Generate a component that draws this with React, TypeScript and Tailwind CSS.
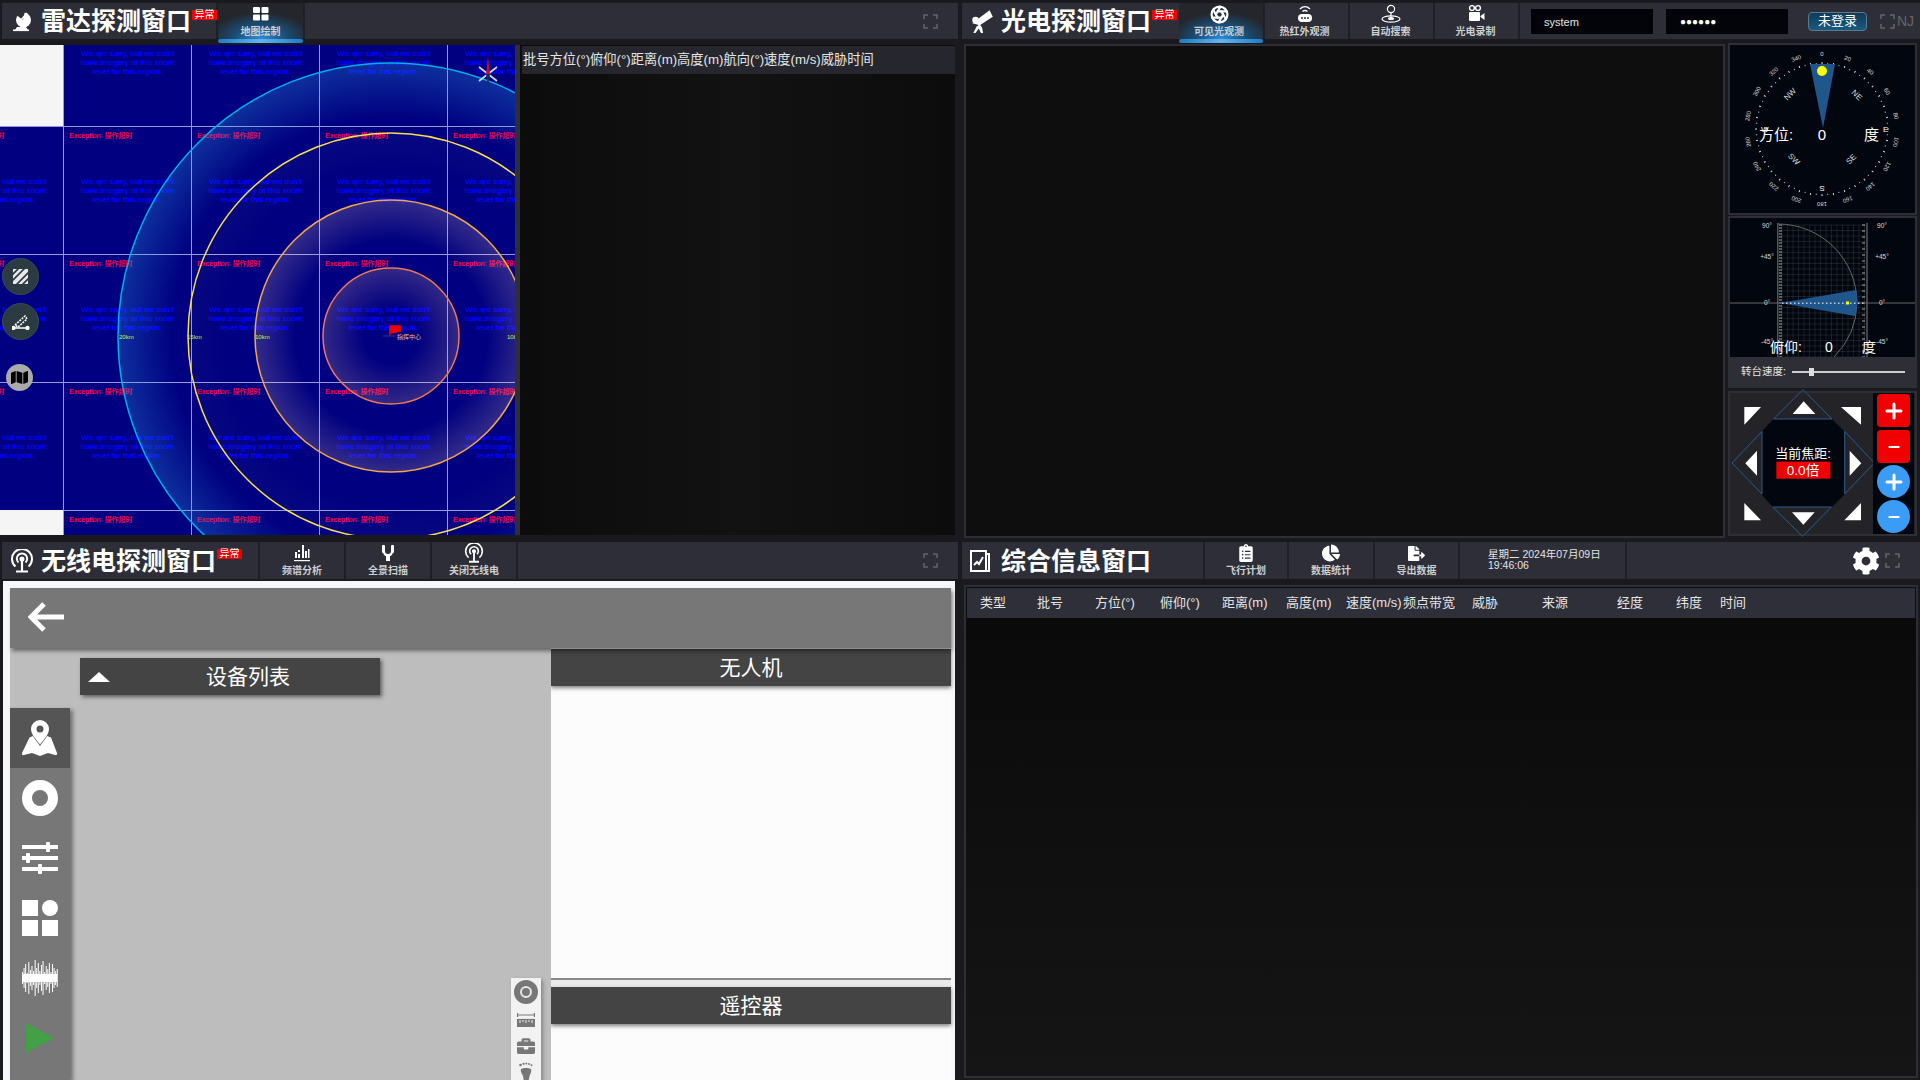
import React from "react";
import { Aperture, Minus, Plus } from "lucide-react";
import { FaBriefcase, FaMap, FaCog, FaChartPie, FaFileExport, FaClipboardList } from "react-icons/fa";

const FONT = '"Liberation Sans","Noto Sans CJK SC",sans-serif';

function FullscreenIcon() {
  return (
    <svg width="15" height="15" viewBox="0 0 15 15" fill="none" stroke="#666" strokeWidth="1.5" className="shrink-0">
      <path d="M1 5V1h4M10 1h4v4M14 10v4h-4M5 14H1v-4" />
    </svg>
  );
}

function Badge() {
  return <span className="self-start mt-[7px] ml-[1px] bg-[#f00000] text-white text-[10px] leading-[10px] h-[10px] w-[25px] text-center shrink-0">异常</span>;
}

function Tab({ w, label, icon, active }: { w: string; label: string; icon: React.ReactNode; active?: boolean }) {
  return (
    <div className={`relative ${w} h-full shrink-0 flex flex-col items-center border-r-2 border-[#1f2024] ${active ? "bg-[radial-gradient(ellipse_60%_75%_at_50%_100%,#2f8fd8_0%,#1a4f78_50%,#24262b_100%)]" : ""}`}>
      <div className="h-[22px] flex items-center justify-center text-white">{icon}</div>
      <span className="mt-[1px] text-[10px] leading-[12px] font-bold text-[#cfcfcf]">{label}</span>
      {active && <div className="absolute left-0 right-0 top-[36px] h-[4px] rounded-sm bg-[linear-gradient(90deg,#1f7cc8,#62b4f0,#1f7cc8)]" />}
    </div>
  );
}

function GridIcon() {
  return (
    <svg width="16" height="14" viewBox="0 0 16 14" fill="#fff">
      <rect width="7" height="6" rx="1" /><rect x="8.5" width="7" height="6" rx="1" />
      <rect y="7.5" width="7" height="6" rx="1" /><rect x="8.5" y="7.5" width="7" height="6" rx="1" />
    </svg>
  );
}

function Dish() {
  return (
    <svg width="20" height="22" viewBox="0 0 20 22" fill="#fff">
      <circle cx="11.5" cy="10" r="7.5" />
      <path d="M3 4L13 1l-2 9z" fill="#2d2e37" />
      <path d="M9 10l6-7" stroke="#fff" strokeWidth="1.6" />
      <path d="M5 17l-2 3h13l-2-3z" />
      <rect x="1" y="19.5" width="16" height="1.6" />
    </svg>
  );
}

function Tower({ s }: { s: number }) {
  return (
    <svg width={s} height={s} viewBox="0 0 24 24" fill="none" stroke="#fff" strokeWidth="2">
      <path d="M5.5 17.5a10 10 0 1 1 13 0" />
      <path d="M8.5 13.5a5.2 5.2 0 1 1 7 0" />
      <circle cx="12" cy="10" r="1.5" fill="#fff" />
      <path d="M12 11v11M6 22.5h12" strokeWidth="2.2" />
    </svg>
  );
}

function Thermal() {
  return (
    <svg width="18" height="20" viewBox="0 0 18 20" fill="none" stroke="#fff" strokeWidth="1.4">
      <path d="M4 5c3-3 7-3 10 0M6.5 7.5c1.5-1.2 3.5-1.2 5 0" />
      <rect x="2" y="10" width="14" height="8" rx="4" fill="#fff" stroke="none" />
      <circle cx="6" cy="14" r="1" fill="#333" stroke="none" /><circle cx="9" cy="14" r="1" fill="#333" stroke="none" /><circle cx="12" cy="14" r="1" fill="#333" stroke="none" />
    </svg>
  );
}

function AutoSearch() {
  return (
    <svg width="22" height="20" viewBox="0 0 22 20" fill="none" stroke="#fff" strokeWidth="1.2">
      <circle cx="11" cy="5" r="3.6" />
      <path d="M11 9v5" />
      <ellipse cx="11" cy="15" rx="9" ry="3.2" />
      <ellipse cx="11" cy="14.5" rx="2.5" ry="1" fill="#fff" />
    </svg>
  );
}

function Record() {
  return (
    <svg width="18" height="20" viewBox="0 0 18 20" fill="#fff">
      <circle cx="5" cy="4" r="2.4" fill="none" stroke="#fff" strokeWidth="1.4" />
      <circle cx="11" cy="4" r="2.4" fill="none" stroke="#fff" strokeWidth="1.4" />
      <rect x="2" y="8" width="11" height="9" rx="1" />
      <path d="M13.5 12l4-3v7l-4-3z" />
    </svg>
  );
}

function Spectrum() {
  return (
    <svg width="18" height="20" viewBox="0 0 18 20" fill="#fff">
      <rect x="2" y="9" width="2" height="6" /><rect x="5" y="7" width="2" height="2" /><rect x="5" y="11" width="2" height="4" />
      <rect x="9" y="2" width="2" height="13" /><rect x="12" y="8" width="2" height="7" /><rect x="15" y="6" width="1.5" height="9" />
      <rect x="1" y="17" width="16" height="1.2" />
    </svg>
  );
}

function Plug() {
  return (
    <svg width="14" height="18" viewBox="0 0 14 18" fill="#fff">
      <rect x="1" y="1" width="3" height="8" rx="1" /><rect x="10" y="1" width="3" height="8" rx="1" />
      <path d="M2 7c0 4 2 5 3 5v5h4v-5c1 0 3-1 3-5h-2c0 2-1 3-3 3S4 9 4 7z" />
    </svg>
  );
}

function Hatched() {
  return (
    <svg width="15" height="15" viewBox="0 0 15 15">
      <rect width="15" height="15" fill="#e8e8e8" />
      <path d="M-1 6L6-1M-1 12L12-1M3 16L16 3M9 16L16 9" stroke="#2b3a42" strokeWidth="1.6" />
    </svg>
  );
}

function Measure() {
  return (
    <svg width="18" height="16" viewBox="0 0 18 16" fill="none" stroke="#fff" strokeWidth="1.5">
      <path d="M1 14h16" /><circle cx="1.5" cy="14" r="1.4" fill="#fff" /><circle cx="15.5" cy="14" r="1.4" fill="#fff" />
      <path d="M3 11L13 2l2 3L6 13z" strokeDasharray="2 1" />
    </svg>
  );
}

function Tile() {
  return (
    <div className="relative bg-[#000080] border-l border-t border-[#9a9ad8] h-[128px] w-[128px]">
      <div className="absolute left-[5px] top-[4px] whitespace-nowrap text-[7.2px] leading-[10px] text-[#e8004a] [text-shadow:0_0_0.6px_#e8004a]">
        Exception: <span className="text-[7px]">操作超时</span>
      </div>
      <div className="absolute left-0 right-0 top-[50px] text-center text-[8px] leading-[9px] text-[#0000ff] [text-shadow:0_0_0.6px_#0000ff]">
        We are sorry, but we don't<br />have imagery at this zoom<br />level for this region.
      </div>
    </div>
  );
}

function RadarMap() {
  const tiles: React.ReactNode[] = [];
  for (let r = 0; r < 5; r++) {
    for (let c = 0; c < 5; c++) {
      const white = c === 0 && (r === 0 || r === 4);
      if (white) {
        tiles.push(<div key={`${r}-${c}`} className="bg-[#f5f5f5] h-[128px] w-[128px]" />);
      } else tiles.push(<Tile key={`${r}-${c}`} />);
    }
  }
  const cx = 391, cy = 291;
  return (
    <div className="relative w-[515px] h-[490px] overflow-hidden shrink-0 bg-[#000080]" style={{ fontFamily: FONT }}>
      <div className="absolute left-[-65px] top-[-47px] grid grid-cols-[repeat(5,128px)] grid-rows-[repeat(5,128px)]">{tiles}</div>
      <svg className="absolute inset-0" width="516" height="490" viewBox="0 0 516 490">
        <defs>
          <radialGradient id="g1"><stop offset="0.4" stopColor="#ffc8a0" stopOpacity="0" /><stop offset="1" stopColor="#ffc8a0" stopOpacity="0.2" /></radialGradient>
          <radialGradient id="g2"><stop offset="0.7" stopColor="#ffd8b0" stopOpacity="0" /><stop offset="1" stopColor="#ffd8b0" stopOpacity="0.2" /></radialGradient>
          <radialGradient id="g3"><stop offset="0.8" stopColor="#ffe8a0" stopOpacity="0" /><stop offset="1" stopColor="#ffe8a0" stopOpacity="0.03" /></radialGradient>
          <radialGradient id="g4"><stop offset="0.8" stopColor="#30a8e8" stopOpacity="0" /><stop offset="1" stopColor="#30a8e8" stopOpacity="0.28" /></radialGradient>
        </defs>
        <circle cx={cx} cy={cy} r="273" fill="url(#g4)" stroke="#00b0e8" strokeWidth="1.5" />
        <circle cx={cx} cy={cy} r="203" fill="url(#g3)" stroke="#f5e050" strokeWidth="1.5" />
        <circle cx={cx} cy={cy} r="136" fill="url(#g2)" stroke="#f0a848" strokeWidth="1.5" />
        <circle cx={cx} cy={cy} r="68" fill="url(#g1)" stroke="#f07850" strokeWidth="1.5" />
        <g fontSize="6" fill="#d8e850">
          <text x="119" y="294">20km</text>
          <text x="187" y="294">15km</text>
          <text x="255" y="294">10km</text>
          <text x="507" y="294">10k</text>
        </g>
        <path d="M390 291V281M390 281h10v5l-10 2z" fill="#f00000" stroke="#f00000" strokeWidth="1.6" />
        <path d="M383 291h13" stroke="#202080" strokeWidth="1.5" />
        <text x="397" y="294" fontSize="6" fill="#f0c080">指挥中心</text>
        <g transform="translate(488 29)">
          <path d="M-9 -7L9 7M9 -7L-9 7" stroke="#d8d8e8" strokeWidth="1.6" />
          <path d="M0 -17L2 0H-2z" fill="#c01030" />
          <path d="M0 17L2 0H-2z" fill="#103060" />
        </g>
      </svg>
      <div className="absolute left-[2px] top-[213px] w-[37px] h-[37px] rounded-full bg-[#2c3a42] border border-[#3c4a52] flex items-center justify-center"><Hatched /></div>
      <div className="absolute left-[2px] top-[258px] w-[37px] h-[37px] rounded-full bg-[#2c3a42] border border-[#3c4a52] flex items-center justify-center"><Measure /></div>
      <div className="absolute left-[6px] top-[319px] w-[27px] h-[27px] rounded-full bg-[#aaaaaa] flex items-center justify-center text-black"><FaMap size={17} /></div>
    </div>
  );
}

function Compass() {
  const cx = 92, cy = 84;
  const ticks: React.ReactNode[] = [];
  for (let a = 0; a < 360; a += 5) {
    ticks.push(<line key={a} x1={cx} y1={cy - 65} x2={cx} y2={cy - (a % 10 === 0 ? 67 : 66)} stroke="#ddd" strokeWidth="1" transform={`rotate(${a} ${cx} ${cy})`} />);
  }
  const labels: React.ReactNode[] = [];
  for (let a = 0; a < 360; a += 20) {
    labels.push(<text key={a} x={cx} y={cy - 73} fontSize="6" textAnchor="middle" fill="#dddddd" transform={`rotate(${a} ${cx} ${cy})`}>{a}</text>);
  }
  const dirs: [string, number, number, number][] = [["NW", 62, 51, -45], ["NE", 125, 52, 45], ["SW", 62, 116, 45], ["SE", 123, 116, -45]];
  return (
    <svg width="185" height="168" viewBox="0 0 185 168" className="block bg-[#02060e]">
      {ticks}
      {labels}
      <path d="M80 19H105L93 83z" fill="#1f568c" />
      <circle cx={92} cy={26} r="5" fill="#ffff00" />
      {dirs.map(([t, x, y, r]) => (
        <text key={t} x={x} y={y} fontSize="8" textAnchor="middle" fill="#ddd" transform={`rotate(${r} ${x} ${y})`}>{t}</text>
      ))}
      <text x={153} y={87} fontSize="8" fill="#fff">E</text>
      <text x={31} y={87} fontSize="8" fill="#fff">W</text>
      <text x={92} y={147} fontSize="8" fill="#fff" textAnchor="middle" transform="rotate(180 92 144)">S</text>
      <g fontSize="15" fill="#fff">
        <text x={29} y={95}>方位:</text>
        <text x={92} y={95} textAnchor="middle">0</text>
        <text x={134} y={95}>度</text>
      </g>
    </svg>
  );
}

function Pitch() {
  const grid: React.ReactNode[] = [];
  for (let x = 52; x <= 136; x += 5.5) grid.push(<line key={`v${x}`} x1={x} y1={7} x2={x} y2={139} stroke="#fff" strokeOpacity="0.09" />);
  for (let y = 7; y <= 139; y += 5.5) grid.push(<line key={`h${y}`} x1={50} y1={y} x2={136} y2={y} stroke="#fff" strokeOpacity="0.09" />);
  const ticks: React.ReactNode[] = [];
  for (let y = 7; y <= 139; y += 3) ticks.push(<line key={y} x1={49} y1={y} x2={52} y2={y} stroke="#aaa" />);
  for (let y = 7; y <= 139; y += 6) ticks.push(<line key={`r${y}`} x1={132} y1={y} x2={135} y2={y} stroke="#aaa" />);
  const dots: React.ReactNode[] = [];
  for (let x = 52; x <= 134; x += 4) dots.push(<rect key={x} x={x} y={84.5} width="1.5" height="1.5" fill="#bcd" />);
  const labels: [string, number][] = [["90°", 8], ["+45°", 39], ["0°", 85], ["-45°", 124]];
  return (
    <svg width="185" height="139" viewBox="0 0 185 139" className="block bg-[#02060e]">
      {grid}
      {ticks}
      <rect x="47" y="5" width="1.5" height="134" fill="#555" />
      <rect x="136" y="5" width="2" height="134" fill="#444" />
      <line x1="0" y1="85" x2="185" y2="85" stroke="#666" />
      <path d="M48 6A79 79 0 0 1 127 85A79 79 0 0 1 104 139" fill="none" stroke="#666" />
      <path d="M50 85L126 72Q129 85 125 98z" fill="#1f568c" />
      {dots}
      <rect x="116" y="83.5" width="3" height="3" fill="#ffff00" />
      <g fontSize="6.5" fill="#ddd">
        {labels.map(([t, y]) => (
          <React.Fragment key={t}>
            <text x={37} y={y + 2} textAnchor="middle">{t}</text>
            <text x={152} y={y + 2} textAnchor="middle">{t}</text>
          </React.Fragment>
        ))}
      </g>
      <g fontSize="14" fill="#fff">
        <text x={40} y={134}>俯仰:</text>
        <text x={99} y={134} textAnchor="middle">0</text>
        <text x={132} y={134}>度</text>
      </g>
    </svg>
  );
}

function Pad() {
  const blue = "#2a5a8c";
  return (
    <svg width="141" height="141" viewBox="35 25 423 423" className="block shrink-0 overflow-visible">
      <polygon points="160,103 335,103 372,140 372,330 335,367 157,367 125,330 125,140" fill="#02060e" />
      <polygon points="248,15 160,103 335,103" fill="none" stroke={blue} strokeWidth="3" />
      <polygon points="157,367 333,367 247,455" fill="none" stroke={blue} strokeWidth="3" />
      <polygon points="125,140 125,328 35,235" fill="none" stroke={blue} strokeWidth="3" />
      <polygon points="373,140 373,328 462,235" fill="none" stroke={blue} strokeWidth="3" />
      <g fill="#fff">
        <polygon points="250,50 217,88 285,88" />
        <polygon points="215,383 283,383 249,420" />
        <polygon points="110,198 110,273 75,236" />
        <polygon points="388,198 388,273 423,236" />
        <polygon points="72,67 122,67 72,120" />
        <polygon points="362,67 422,67 422,120" />
        <polygon points="72,355 122,407 72,407" />
        <polygon points="422,355 422,407 372,407" />
      </g>
      <text x="248" y="219" fontSize="39" fill="#fff" textAnchor="middle">当前焦距:</text>
      <rect x="168" y="231" width="162" height="51" fill="#f00000" />
      <text x="248" y="271" fontSize="41" fill="#fff" textAnchor="middle">0.0倍</text>
    </svg>
  );
}

function ArrowBack() {
  return (
    <svg width="36" height="30" viewBox="0 0 36 30" fill="none" stroke="#fff" strokeWidth="5">
      <path d="M36 15H3M16 2L3 15l13 13" />
    </svg>
  );
}

function MapPin() {
  return (
    <svg width="36" height="36" viewBox="0 0 36 36" fill="#fff">
      <path fillRule="evenodd" d="M18 0a9 9 0 0 1 9 9c0 5.500-5.500 11-9 15.500C14.500 20 9 14.500 9 9a9 9 0 0 1 9-9zm0 5.500a3.500 3.500 0 1 0 0 7 3.500 3.500 0 0 0 0-7z" />
      <path d="M7.500 17.500L11 16c1.500 3 5 7 7 10 2-3 5.500-7 7-10l4 1.500L35 33c.5 1.500-.5 2.500-2 2l-7-2-8 3-8-3-8 2c-1.500.5-2.500-.5-2-2z" />
    </svg>
  );
}

function Sliders() {
  return (
    <svg width="36" height="36" viewBox="0 0 36 36" fill="#fff">
      <rect y="5" width="36" height="4" /><rect x="24" y="2" width="4" height="10" rx="1" />
      <rect y="16" width="36" height="4" /><rect x="4" y="13" width="4" height="10" rx="1" />
      <rect y="27" width="36" height="4" /><rect x="16" y="24" width="4" height="10" rx="1" />
    </svg>
  );
}

function Shapes() {
  return (
    <svg width="36" height="36" viewBox="0 0 36 36" fill="#fff">
      <rect width="16" height="16" /><circle cx="28" cy="8" r="8" />
      <rect y="20" width="16" height="16" /><rect x="20" y="20" width="16" height="16" />
    </svg>
  );
}

function Wave() {
  const hs = [12, 20, 28, 10, 32, 16, 24, 14, 36, 20, 30, 14, 26, 34, 12, 24, 18, 30, 12, 28, 20, 14, 18];
  return (
    <svg width="36" height="38" viewBox="0 0 36 38" fill="#fff">
      <rect x="1" y="15" width="34" height="8" />
      {hs.map((h, i) => <rect key={i} x={i * 1.58} y={19 - h / 2} width="1" height={h} />)}
    </svg>
  );
}

function Ruler() {
  return (
    <svg width="18" height="14" viewBox="0 0 18 14" fill="none" stroke="#777777" strokeWidth="1.2">
      <path d="M0.600 0v4M17.400 0v4M0.600 2h16.800" />
      <rect x="0.600" y="6.500" width="16.800" height="7" fill="#777777" />
      <path d="M3 7v3M6 7v2M9 7v3M12 7v2M15 7v3" stroke="#f2f2f2" strokeWidth="1" />
    </svg>
  );
}

function Foot() {
  return (
    <svg width="14" height="20" viewBox="0 0 14 20" fill="#777777">
      <path d="M2 7c2-1.500 8-1.500 10 0 1 3-1 5-1.500 7-.3 3-1 6-3.500 6S4.500 17 4 14C3.500 12 1 10 2 7z" />
      <circle cx="1.500" cy="3" r="1.300" /><circle cx="4.500" cy="1.800" r="1.100" /><circle cx="7.300" cy="1.500" r="1" /><circle cx="10" cy="2" r="1" /><circle cx="12.500" cy="3.200" r="1" />
    </svg>
  );
}

function NavItem({ children, active }: { children: React.ReactNode; active?: boolean }) {
  return <div className={`h-[60px] shrink-0 flex items-center justify-center text-white ${active ? "bg-[#555555]" : ""}`}>{children}</div>;
}

function Title({ text, icon }: { text: string; icon: React.ReactNode }) {
  return (
    <div className="flex items-center h-full">
      <div className="w-[39px] flex items-center justify-center shrink-0">{icon}</div>
      <span className="text-[25px] leading-[30px] font-bold text-white whitespace-nowrap">{text}</span>
    </div>
  );
}

const COLS: [string, string][] = [
  ["类型", "w-[57px]"], ["批号", "w-[58px]"], ["方位(°)", "w-[65px]"], ["俯仰(°)", "w-[62px]"], ["距离(m)", "w-[64px]"],
  ["高度(m)", "w-[60px]"], ["速度(m/s)", "w-[57px]"], ["频点带宽", "w-[69px]"], ["威胁", "w-[70px]"], ["来源", "w-[75px]"],
  ["经度", "w-[59px]"], ["纬度", "w-[44px]"], ["时间", "w-[40px]"],
];

export default function App() {
  const hdr = "flex items-center h-[36px] mx-[2px] bg-[#2d2e37]";
  return (
    <div className="w-[1920px] h-[1080px] overflow-hidden bg-[#1a1a1e] flex flex-col" style={{ fontFamily: FONT }}>
      <div className="flex h-[542px] shrink-0">
        {/* Radar */}
        <div className="w-[960px] flex flex-col pt-[3px]">
          <div className={hdr}>
            <div className="w-[216px] h-full flex items-center border-r-2 border-[#1f2024]">
              <Title text="雷达探测窗口" icon={<Dish />} />
              <Badge />
            </div>
            <Tab w="w-[87px]" label="地图绘制" icon={<GridIcon />} active />
            <div className="ml-auto mr-[20px]"><FullscreenIcon /></div>
          </div>
          <div className="flex mt-[6px] h-[490px]">
            <RadarMap />
            <div className="w-[7px] bg-[#2e2f36] border-r-2 border-[#0c0c0c]" />
            <div className="w-[433px] flex flex-col bg-[#0c0c0c]">
              <div className="h-[28px] mt-[1px] bg-[#26272e] flex items-center pl-[1px] text-[13.25px] text-[#e5e5e5] whitespace-nowrap">批号方位(°)俯仰(°)距离(m)高度(m)航向(°)速度(m/s)威胁时间</div>
              <div className="flex-1 bg-[linear-gradient(90deg,#0c0c0c,#121212_50%,#0c0c0c)]" />
            </div>
          </div>
        </div>
        {/* Optical */}
        <div className="w-[960px] flex flex-col pt-[3px]">
          <div className="flex items-center h-[36px] ml-[2px] bg-[#2d2e37]">
            <div className="w-[217px] h-full flex items-center">
              <Title text="光电探测窗口" icon={
                <svg width="24" height="26" viewBox="0 0 22 24" fill="#fff"><path d="M2 14L18 2l3 6-12 8zM9 15l2 3 1 5h-2l-2-4-3 4H3l3-6z" /><circle cx="5" cy="11" r="3" /></svg>
              } />
              <Badge />
            </div>
            <Tab w="w-[86px] pr-[4px]" label="可见光观测" icon={<Aperture size={19} strokeWidth={2.8} />} active />
            <Tab w="w-[85px] pr-[4px]" label="热红外观测" icon={<Thermal />} />
            <Tab w="w-[85px] pr-[2px]" label="自动搜索" icon={<AutoSearch />} />
            <Tab w="w-[85px] pr-[2px]" label="光电录制" icon={<Record />} />
            <div className="w-[122px] h-[25px] ml-[11px] bg-[#02040a] flex items-center pl-[13px] pt-[2px] text-[11px] text-[#e5e5e5] shrink-0">system</div>
            <div className="w-[122px] h-[25px] ml-[13px] bg-[#02040a] flex items-center pl-[14px] pt-[1px] text-[10px] text-white shrink-0">●●●●●●</div>
            <div className="w-[59px] h-[19px] ml-[20px] rounded-sm border border-[#5a7a90] bg-[linear-gradient(180deg,#0f3a58,#1a5a80)] flex items-center justify-center text-[13px] text-white shrink-0">未登录</div>
            <div className="ml-[13px] shrink-0"><FullscreenIcon /></div>
            <span className="text-[14px] text-[#666] ml-[2px]">NJ</span>
          </div>
          <div className="flex mt-[4px] ml-[4px] h-[494px]">
            <div className="w-[761px] h-full mt-[1px] bg-[#0e0e0e] border-2 border-[#2e2f36]" />
            <div className="w-[189px] ml-[3px] flex flex-col">
              <div className="h-[172px] border-2 border-[#2e2f36] overflow-hidden"><Compass /></div>
              <div className="h-[172px] mt-[1px] border-2 border-[#2e2f36] flex flex-col overflow-hidden">
                <Pitch />
                <div className="flex-1 bg-[#2e2f36] flex items-center pl-[11px]">
                  <span className="text-[10.5px] text-[#e5e5e5] w-[51px] whitespace-nowrap">转台速度:</span>
                  <div className="relative w-[113px] h-[2px] bg-[#cccccc]">
                    <div className="absolute left-[17px] top-[-3px] w-[5px] h-[8px] bg-[#dddddd]" />
                  </div>
                </div>
              </div>
              <div className="h-[145px] mt-[3px] border-2 border-[#2e2f36] bg-[#242428] flex pl-[2px]">
                <Pad />
                <div className="w-[41px] bg-[#02060e] flex flex-col items-center pt-[1px] text-white">
                  <div className="w-[33px] h-[33px] bg-[#f00000] rounded-sm flex items-center justify-center"><Plus size={24} strokeWidth={3} /></div>
                  <div className="w-[33px] h-[33px] mt-[3px] bg-[#f00000] rounded-sm flex items-center justify-center"><Minus size={16} strokeWidth={3} /></div>
                  <div className="w-[33px] h-[33px] mt-[2px] bg-[#3a9cf5] rounded-full flex items-center justify-center"><Plus size={24} strokeWidth={3} /></div>
                  <div className="w-[33px] h-[33px] mt-[2px] bg-[#3a9cf5] rounded-full flex items-center justify-center"><Minus size={16} strokeWidth={3} /></div>
                </div>
              </div>
            </div>
          </div>
        </div>
      </div>

      <div className="flex flex-1 min-h-0">
        {/* Radio */}
        <div className="w-[960px] flex flex-col">
          <div className="flex items-center h-[37px] mx-[2px] bg-[#2d2e37] shrink-0">
            <div className="w-[258px] h-full flex items-center border-r-2 border-[#1f2024]">
              <Title text="无线电探测窗口" icon={<Tower s={24} />} />
              <Badge />
            </div>
            <div className="h-full flex items-center">
              <Tab w="w-[86px]" label="频谱分析" icon={<Spectrum />} />
              <Tab w="w-[86px]" label="全景扫描" icon={<Plug />} />
              <Tab w="w-[86px]" label="关闭无线电" icon={<Tower s={20} />} />
            </div>
            <div className="ml-auto mr-[20px]"><FullscreenIcon /></div>
          </div>
          <div className="mt-[2px] ml-[3px] w-[952px] flex-1 min-h-0 bg-[#f5f7fa] pl-[7px] pr-[4px] pt-[7px] flex flex-col overflow-hidden">
            <div className="h-[60px] shrink-0 bg-[#777777] shadow-[2px_3px_4px_rgba(0,0,0,.45)] flex items-center pl-[18px] pb-[2px] relative z-10"><ArrowBack /></div>
            <div className="flex flex-1 min-h-0">
              <div className="relative w-[541px] bg-[#bdbdbd] pt-[10px] flex flex-col">
                <div className="ml-[70px] w-[300px] h-[37px] bg-[#444444] shadow-[2px_2px_4px_rgba(0,0,0,.5)] flex items-center relative shrink-0">
                  <div className="ml-[8px] w-0 h-0 border-l-[11px] border-r-[11px] border-b-[10px] border-l-transparent border-r-transparent border-b-white" />
                  <span className="absolute left-0 right-0 text-center text-[21px] text-white" style={{ paddingLeft: 36 }}>设备列表</span>
                </div>
                <div className="mt-[13px] w-[60px] flex-1 bg-[#777777] shadow-[3px_2px_4px_rgba(0,0,0,.4)] flex flex-col">
                  <NavItem active><MapPin /></NavItem>
                  <NavItem><div className="w-[36px] h-[36px] rounded-full border-[10px] border-white" /></NavItem>
                  <NavItem><Sliders /></NavItem>
                  <NavItem><Shapes /></NavItem>
                  <NavItem><Wave /></NavItem>
                  <NavItem>
                    <svg width="28" height="30" viewBox="0 0 28 30"><polygon points="0,0 28,15 0,30" fill="#43a047" /></svg>
                  </NavItem>
                </div>
                <div className="absolute right-[10px] top-[330px] w-[30px] h-[110px] bg-[#f2f2f2] shadow-[2px_2px_4px_rgba(0,0,0,.3)] flex flex-col items-center text-[#777777]">
                  <div className="mt-[2px] w-[24px] h-[24px] shrink-0 rounded-full bg-[#777777] flex items-center justify-center">
                    <div className="w-[12px] h-[12px] rounded-full border-2 border-[#e8e8e8]" />
                  </div>
                  <div className="mt-[9px]"><Ruler /></div>
                  <div className="mt-[10px]"><FaBriefcase size={18} /></div>
                  <div className="mt-[7px]"><Foot /></div>
                </div>
              </div>
              <div className="w-[400px] flex flex-col bg-[#fcfcfc]">
                <div className="h-[37px] mt-[1px] shrink-0 bg-[#444444] shadow-[0_2px_4px_rgba(0,0,0,.5)] flex items-center justify-center text-[21px] text-white">无人机</div>
                <div className="h-[292px] shrink-0" />
                <div className="h-[9px] shrink-0 bg-[#ebebeb] border-t-2 border-[#888888]" />
                <div className="h-[37px] shrink-0 bg-[#444444] shadow-[0_2px_4px_rgba(0,0,0,.5)] flex items-center justify-center text-[21px] text-white">遥控器</div>
              </div>
            </div>
          </div>
        </div>
        {/* Info */}
        <div className="w-[960px] flex flex-col">
          <div className="flex items-center h-[37px] ml-[2px] bg-[#2d2e37] shrink-0">
            <div className="w-[243px] h-full flex items-center border-r-2 border-[#1f2024]">
              <Title text="综合信息窗口" icon={
                <svg width="22" height="24" viewBox="0 0 22 24" fill="none" stroke="#fff" strokeWidth="2" className="mr-[4px]"><rect x="2" y="2" width="15" height="20" /><path d="M17 5h3v17H7" /><path d="M5 16l3-3 2 2 4-7" /></svg>
              } />
            </div>
            <Tab w="w-[84px]" label="飞行计划" icon={<FaClipboardList size={18} />} />
            <Tab w="w-[86px]" label="数据统计" icon={<FaChartPie size={18} />} />
            <Tab w="w-[85px]" label="导出数据" icon={<FaFileExport size={17} />} />
            <div className="w-[167px] h-full border-r-2 border-[#1f2024] pl-[28px] pt-[7px] text-[10.5px] leading-[11px] text-[#e5e5e5] whitespace-nowrap shrink-0">星期二 2024年07月09日<br />19:46:06</div>
            <div className="ml-auto flex items-center mr-[20px] gap-[5px]">
              <FaCog size={28} color="#fff" />
              <FullscreenIcon />
            </div>
          </div>
          <div className="mt-[6px] ml-[4px] mr-[2px] h-[493px] border-2 border-[#2e2f36] bg-[#0c0c0c] flex flex-col">
            <div className="h-[30px] mt-[1px] mx-[1px] bg-[#2e2f38] flex items-center pl-[13px] text-[13px] text-[#e5e5e5] shrink-0">
              {COLS.map(([t, w]) => <span key={t} className={`${w} shrink-0 whitespace-nowrap`}>{t}</span>)}
            </div>
            <div className="flex-1 bg-[linear-gradient(180deg,#0a0a0a,#151515)]" />
          </div>
        </div>
      </div>
    </div>
  );
}
